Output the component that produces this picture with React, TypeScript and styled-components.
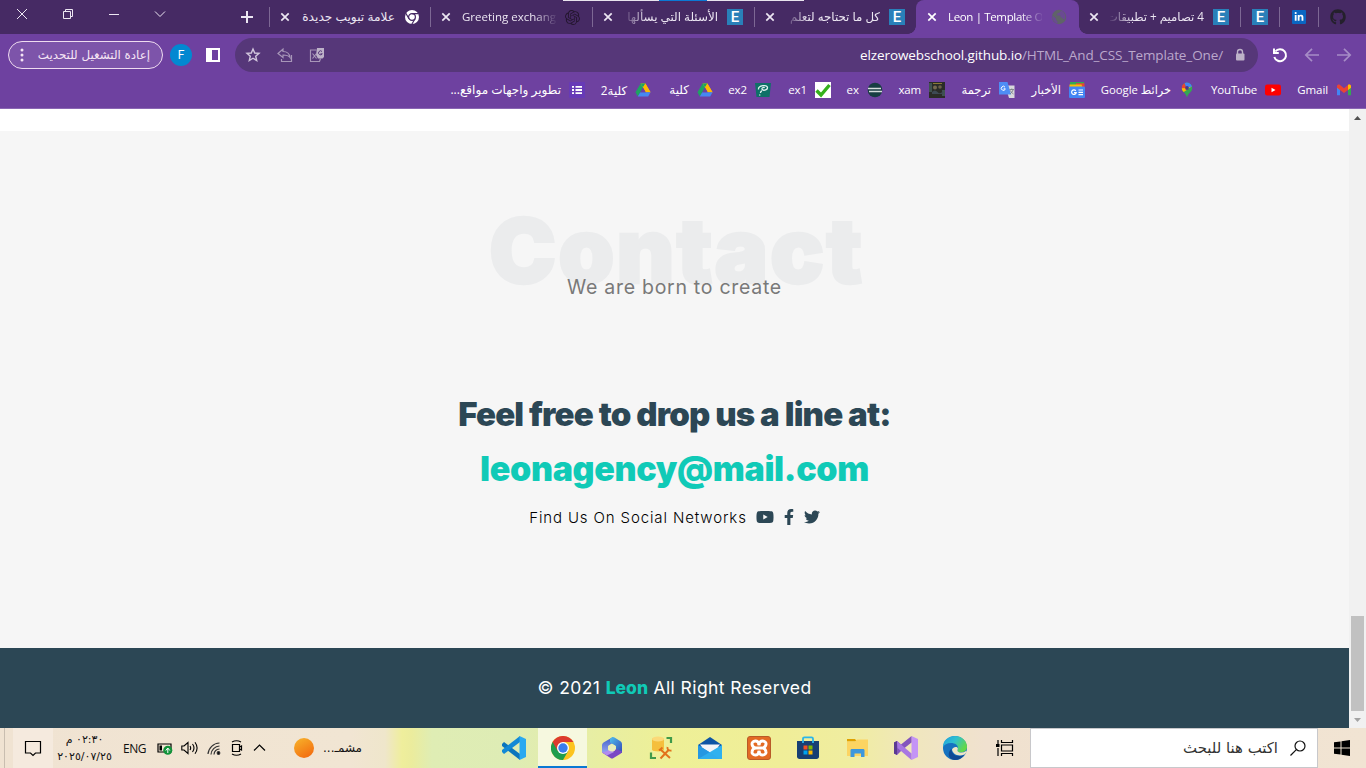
import React from "react";
import styled, { createGlobalStyle, css } from "styled-components";
import { FaYoutube, FaFacebookF, FaTwitter, FaGithub, FaLinkedinIn } from "react-icons/fa";
import { SiOpenai } from "react-icons/si";

const GlobalStyle = createGlobalStyle`
  * { box-sizing: border-box; }
  html, body { margin: 0; padding: 0; }
  body { width: 1366px; height: 768px; overflow: hidden; font-family: "Open Sans", "DejaVu Sans", sans-serif; }
  svg { display: block; flex: none; }
`;

const Screen = styled.div`
  width: 1366px;
  height: 768px;
  display: flex;
  flex-direction: column;
  position: relative;
  overflow: hidden;
`;

/* ---------- tab strip ---------- */
const TopEdge = styled.div`
  position: absolute;
  top: 0;
  left: 563px;
  width: 241px;
  height: 1px;
  background: linear-gradient(90deg, #e9e4ee 0 96px, #0b78d4 96px 144px, #e9e4ee 144px);
`;
const TabStrip = styled.div`
  height: 34px;
  flex: none;
  display: flex;
  background: #462a64;
  color: #ece6f2;
`;
const WindowControls = styled.div`
  width: 269px;
  display: flex;
  padding-left: 15px;
  align-items: flex-start;
`;
const ControlSlot = styled.div<{ $w: number; $top?: number }>`
  width: ${(p) => p.$w}px;
  padding-top: ${(p) => p.$top ?? 7}px;
`;
const Tab = styled.div<{ $w: number; $active?: boolean; $line?: boolean }>`
  width: ${(p) => p.$w}px;
  height: 34px;
  flex: none;
  display: flex;
  align-items: center;
  background: ${(p) =>
    p.$line ? "linear-gradient(#7d6894, #7d6894) 0 7px / 1px 20px no-repeat" : "none"};
  ${(p) =>
    p.$active &&
    css`
      position: relative;
      background: #6e41a0;
      border-radius: 8px 8px 0 0;
      color: #fff;
      &::before,
      &::after {
        content: "";
        position: absolute;
        bottom: 0;
        width: 8px;
        height: 8px;
      }
      &::before {
        left: -8px;
        background: radial-gradient(circle at 0 0, transparent 7.5px, #6e41a0 8px);
      }
      &::after {
        right: -8px;
        background: radial-gradient(circle at 100% 0, transparent 7.5px, #6e41a0 8px);
      }
    `}
`;
const CloseSlot = styled.div<{ $w?: number }>`
  width: ${(p) => p.$w ?? 32}px;
  padding-left: ${(p) => (p.$w ?? 32) - 21}px;
`;
const TabTitle = styled.div<{ $rtl?: boolean; $fade?: boolean; $size?: number; $gap?: number }>`
  width: 94px;
  height: 22px;
  line-height: 21px;
  overflow: hidden;
  white-space: nowrap;
  direction: ${(p) => (p.$rtl ? "rtl" : "ltr")};
  font-size: ${(p) => p.$size ?? 11.5}px;
  letter-spacing: ${(p) => p.$gap ?? 0}px;
  -webkit-mask-image: ${(p) =>
    p.$fade ? `linear-gradient(${p.$rtl ? 270 : 90}deg, #000 76%, transparent 102%)` : "none"};
`;
const TabIcon = styled.div<{ $start?: number }>`
  margin-left: ${(p) => p.$start ?? 9}px;
`;
const ESquare = styled.div`
  width: 16px;
  height: 16px;
  background: #2980b9;
  color: #fff;
  font: 500 15px/16px "Roboto", sans-serif;
  text-align: center;
`;
const InSquare = styled.div`
  width: 14px;
  height: 14px;
  border-radius: 1px;
  background: #0a66c2;
  color: #fff;
  display: grid;
  place-items: center;
`;

/* ---------- address bar ---------- */
const Toolbar = styled.div`
  height: 42px;
  flex: none;
  background: #6e41a0;
  display: flex;
  align-items: center;
  padding: 0 14px 0 8px;
  color: #fff;
`;
const UpdatePill = styled.div`
  width: 155px;
  height: 28px;
  border: 1px solid #efdcf0;
  border-radius: 14px;
  background: #7d54aa;
  display: flex;
  align-items: center;
  justify-content: space-between;
  padding: 0 12px 0 11px;
  color: #f5e4f4;
`;
const PillText = styled.span`
  direction: rtl;
  font: 11.85px/24px "DejaVu Sans", sans-serif;
  white-space: nowrap;
`;
const Avatar = styled.div`
  width: 22px;
  height: 22px;
  border-radius: 50%;
  background: #0288d1;
  margin: 0 14px 0 7px;
  font: 12px/22px "Roboto", sans-serif;
  text-align: center;
`;
const SidePanel = styled.div`
  width: 14px;
  height: 14px;
  border: 2px solid #fff;
  border-left-width: 6px;
  margin-right: 15px;
`;
const Omnibox = styled.div`
  width: 1023px;
  height: 34px;
  border-radius: 17px;
  background: #563779;
  display: flex;
  align-items: center;
  padding: 0 12px 0 10px;
  gap: 16px;
`;
const Url = styled.div`
  margin-left: auto;
  margin-right: -5px;
  font-size: 13.5px;
  letter-spacing: -0.11px;
  color: #bba8cc;
  white-space: nowrap;
  b { font-weight: 400; color: #fff; }
`;
const NavIcons = styled.div`
  display: flex;
  align-items: center;
  margin-left: 14px;
  gap: 16px;
`;

/* ---------- bookmarks ---------- */
const Bookmarks = styled.div`
  height: 33px;
  flex: none;
  display: flex;
  flex-direction: row-reverse;
  background: #6e41a0;
  border-bottom: 1px solid #8a66b3;
  padding: 5px 14px 0 0;
  color: #fff;
`;
const Bookmark = styled.div<{ $w: number }>`
  width: ${(p) => p.$w}px;
  height: 18px;
  flex: none;
  display: flex;
  flex-direction: row-reverse;
  align-items: center;
  gap: 8px;
`;
const BookmarkText = styled.span<{ $rtl?: boolean; $size?: number; $gap?: number }>`
  flex: none;
  direction: ${(p) => (p.$rtl ? "rtl" : "ltr")};
  font-size: ${(p) => p.$size ?? 11.5}px;
  letter-spacing: ${(p) => p.$gap ?? 0}px;
  line-height: 18px;
  white-space: nowrap;
`;

/* ---------- web page ---------- */
const Viewport = styled.div`
  height: 619px;
  flex: none;
  display: flex;
`;
const Page = styled.main`
  width: 1349px;
  padding-top: 22px;
  background: #fff;
  font-family: "Inter", sans-serif;
  text-align: center;
`;
const Contact = styled.section`
  height: 517px;
  background: #f6f6f6;
  display: flex;
  flex-direction: column;
  align-items: center;
  white-space: nowrap;
`;
const Ghost = styled.h2`
  margin: 60px 0 0 4px;
  height: 82px;
  font-size: 90px;
  line-height: 119px;
  font-weight: 900;
  letter-spacing: 1.8px;
  -webkit-text-stroke: 2.5px #ebeced;
  color: #ebeced;
`;
const Tagline = styled.p`
  margin: 0;
  height: 28px;
  position: relative;
  font: 19.5px/28px "Inter", sans-serif;
  letter-spacing: 0.72px;
  color: #797979;
`;
const Drop = styled.h3`
  margin: 89px 0 0;
  height: 48px;
  font-size: 33px;
  line-height: 48px;
  font-weight: 900;
  letter-spacing: -0.83px;
  color: #2c4755;
`;
const Mail = styled.a`
  margin-top: 7px;
  height: 48px;
  font-size: 34px;
  line-height: 48px;
  font-weight: 900;
  letter-spacing: -0.35px;
  color: #10cab7;
`;
const Social = styled.div`
  margin-top: 12px;
  height: 24px;
  display: flex;
  align-items: center;
  font-size: 15px;
  font-weight: 300;
  letter-spacing: 0.87px;
  color: #000;
  svg { color: #2c4755; }
`;
const SocialLinks = styled.div`
  display: flex;
  align-items: center;
  margin-left: 9px;
  gap: 7px;
`;
const Footer = styled.footer`
  height: 80px;
  background: #2c4755;
  color: #fff;
  font-size: 17.5px;
  font-weight: 400;
  letter-spacing: 0.42px;
  line-height: 80px;
  b { color: #10cab7; font-weight: 800; letter-spacing: 0; }
`;
const Scrollbar = styled.div`
  width: 17px;
  background: #f1f1f1;
  display: flex;
  flex-direction: column;
  align-items: center;
  padding: 7px 0 6px;
  justify-content: space-between;
`;
const Thumb = styled.div`
  width: 13px;
  height: 95px;
  margin-top: auto;
  margin-bottom: 7px;
  background: #c1c1c1;
`;

/* ---------- taskbar ---------- */
const Taskbar = styled.div`
  height: 40px;
  flex: none;
  display: flex;
  align-items: center;
  color: #111;
  background: linear-gradient(90deg, #f0e3d2 0 4px, #c9beb0 4px 5px, #f0e3d2 5px, #f1e5d3 350px, #efe6cb 385px, #efee9c 402px, #ebec9d 412px, #dfedb4 432px, #deecb5 510px, #e8eea2 600px, #eef097 670px, #f0ee98 780px, #f0eda0 850px, #f0e6bf 920px, #f0e1cf 985px, #f1e4d3 1366px);
`;
const Notify = styled.div`
  width: 40px;
  height: 40px;
  margin-left: 13px;
  background: #f5eade;
  display: grid;
  place-items: center;
`;
const Clock = styled.div`
  width: 65px;
  margin-right: 1px;
  padding-right: 2px;
  font: 11px/17px "DejaVu Sans", sans-serif;
  text-align: center;
  white-space: nowrap;
`;
const Lang = styled.div`
  width: 38px;
  padding-left: 4px;
  font-size: 12px;
  letter-spacing: -0.5px;
`;
const Tray = styled.div`
  display: flex;
  align-items: center;
  gap: 8px;
  height: 40px;
`;
const Weather = styled.div`
  display: flex;
  align-items: center;
  gap: 9px;
  margin-left: 27px;
  width: 195px;
  font: 12px/24px "DejaVu Sans", sans-serif;
  direction: ltr;
`;
const Sun = styled.div`
  width: 20px;
  height: 20px;
  border-radius: 50%;
  background: linear-gradient(150deg, #f7b52c, #f3640c);
`;
const TaskButton = styled.div<{ $active?: boolean; $w?: number }>`
  width: ${(p) => p.$w ?? 49}px;
  height: 40px;
  flex: none;
  display: grid;
  place-items: center;
  ${(p) =>
    p.$active &&
    css`
      background: #f6f8df;
      border-bottom: 2px solid #0a78d4;
      padding-top: 2px;
    `}
`;
const Search = styled.div`
  width: 288px;
  height: 40px;
  flex: none;
  margin-left: auto;
  background: #fff;
  border: 1px solid #c8c8cb;
  display: flex;
  align-items: center;
  justify-content: flex-end;
  gap: 12px;
  padding-right: 11px;
  font: 14.9px/24px "DejaVu Sans", sans-serif;
  color: #333;
`;
const Start = styled.div`
  width: 48px;
  flex: none;
  display: grid;
  place-items: center;
`;

const CloseX = () => (
  <svg width="10" height="10" viewBox="0 0 10 10" stroke="currentColor" strokeWidth="1.7">
    <path d="M1.3 1.3 8.7 8.7M8.7 1.3 1.3 8.7" />
  </svg>
);
const ChromeMono = () => (
  <svg width="16" height="16" viewBox="0 0 16 16">
    <circle cx="8" cy="8" r="7" fill="#fff" />
    <circle cx="8" cy="8" r="3.4" fill="none" stroke="#462a64" strokeWidth="1.2" />
    <path d="M8 4.6h6.4M5 9.7 1.8 4.2M11 9.7 7.8 15.2" stroke="#462a64" strokeWidth="1.2" />
  </svg>
);
const Globe = () => (
  <svg width="16" height="16" viewBox="0 0 16 16">
    <circle cx="8" cy="8" r="7.2" fill="#5f6368" />
    <path d="M1.600 6.500 5 9.500v1.500l1.500 1.500v2.200A6.800 6.800 0 0 1 1.600 6.500M9.500 1.200v1.300L8 4H6.500v1.500L5 6.500h4.500v2H11l1.200 1.500 1.300.5A6.500 6.500 0 0 0 9.500 1.200" fill="#6e41a0" opacity=".75" />
  </svg>
);
const Drive = () => (
  <svg width="16" height="16" viewBox="0 0 16 16">
    <path d="M5.600 1.500h4.800L5.300 10.300 2.800 14.400.5 10.300z" fill="#1ea362" />
    <path d="M5.600 1.500h4.800l5.100 8.800h-4.800z" fill="#ffba00" />
    <path d="M8 1.500H5.600L8 5.600l2.400-4.100z" fill="#1ea362" />
    <path d="M8 5.600 10.400 1.500l5.100 8.800h-4.800z" fill="#ffba00" />
    <path d="M5.300 10.300h10.200l-2.300 4.100H2.800z" fill="#4688f1" />
    <path d="M8 5.600 5.300 10.300h5.400z" fill="#6e41a0" />
  </svg>
);
const Gmail = () => (
  <svg width="16" height="16" viewBox="0 0 16 16">
    <path d="M1 3.500v9.800h3V7z" fill="#4285f4" />
    <path d="M15 3.500v9.800h-3V7z" fill="#34a853" />
    <path d="M1 4.200C1 2.500 3 2.200 4 3l4 3.200L12 3c1-.8 3-.5 3 1.200v1.600L8 11 1 5.800z" fill="#ea4335" />
    <path d="M12 3c1-.8 3-.5 3 1.200v1.600L12 8z" fill="#fbbc04" />
  </svg>
);
const YouTube = () => (
  <svg width="16" height="16" viewBox="0 0 16 16">
    <rect y="2.500" width="16" height="11" rx="2.200" fill="#f00" />
    <path d="m6.500 5.700 4 2.300-4 2.300z" fill="#fff" />
  </svg>
);
const MapsPin = () => (
  <svg width="16" height="16" viewBox="0 0 16 16">
    <path d="M8 .6a5.300 5.300 0 0 0-5.200 5.600c0 3.800 3.800 4.200 5.200 9.200 1.400-5 5.200-5.400 5.200-9.200A5.300 5.300 0 0 0 8 .6" fill="#34a853" />
    <path d="M5.500 1.200A5.300 5.300 0 0 1 13 4.600L8 8z" fill="#4285f4" />
    <path d="M5.500 1.200C3.600 2.200 2.600 4 2.800 6.500L8 8z" fill="#ea4335" />
    <path d="M2.800 6.200c.1 1.800.9 2.800 1.900 3.900L13 4.600 8 6z" fill="#fbbc04" />
    <path d="M13 4.600c.6 3.400-1 4.700-2.500 6.200L8 8z" fill="#34a853" />
    <circle cx="8" cy="6" r="1.900" fill="#4c3a86" />
  </svg>
);
const News = () => (
  <svg width="16" height="16" viewBox="0 0 16 16">
    <path d="M1 0h14v5H1z" fill="#34a853" />
    <path d="M7 1.300h8.500v4H7z" fill="#ea4335" />
    <path d="M.5 2.500h12l1 3H.5z" fill="#fbbc04" />
    <rect y="4.500" width="16" height="11.500" rx="1" fill="#4285f4" />
    <path d="M9.500 8h4.500M9.500 10.300h4.500M9.500 12.600h4.500" stroke="#fff" strokeWidth="1.200" />
    <path d="M6.800 8.800A2.300 2.300 0 1 0 7.200 10.600H5" stroke="#fff" strokeWidth="1.200" fill="none" />
  </svg>
);
const Translate = () => (
  <svg width="16" height="16" viewBox="0 0 16 16">
    <path d="M6 3.500h9.500V16H10z" fill="#d8d8dc" />
    <path d="M0 0h8.500l3.500 12.500H0z" fill="#4e8df5" />
    <path d="M6 5.200A2 2 0 1 0 6.300 6.800H4.600" stroke="#fff" fill="none" />
    <path d="M10.500 7.500h4.500M12.800 6.500v1M14 8c-.5 2-2 3-3 4M11.500 8.500c.5 1.500 1.500 2.500 3 3.500" stroke="#70757a" strokeWidth=".8" fill="none" />
  </svg>
);
const Photo = () => (
  <svg width="16" height="16" viewBox="0 0 16 16">
    <rect width="16" height="16" fill="#2a2c27" />
    <path d="M0 1h3v9H0zM13 8h3v6h-3z" fill="#3f5350" />
    <circle cx="6" cy="5.500" r="2" fill="#75694f" />
    <circle cx="11" cy="5" r="1.800" fill="#6b6048" />
    <path d="M3 10q3-3 5.500 0T14 9v3H3z" fill="#3d4a54" />
    <path d="M4 1h9v1H4z" fill="#8b7836" />
  </svg>
);
const Badge = () => (
  <svg width="16" height="16" viewBox="0 0 16 16">
    <circle cx="8" cy="8" r="7.300" fill="#173d42" />
    <path d="M1 6.500h13M2 9.500h13" stroke="#d5dcdc" strokeWidth="1.300" />
  </svg>
);
const Check = () => (
  <svg width="16" height="16" viewBox="0 0 16 16">
    <rect width="16" height="16" fill="#fff" />
    <path d="M1.500 8.500 6 13 14.500 3" stroke="#35b01d" strokeWidth="3.400" fill="none" />
  </svg>
);
const QuestionMark = () => (
  <svg width="16" height="16" viewBox="0 0 16 16">
    <path d="M0 1h16l-1.500 14H1.500z" fill="#0e7167" />
    <path d="M3.500 7.500C3 3.500 12.500 2 12.500 5.500c0 3-5 3.500-5.500 1.500-.3-1.500 2-2 2.500-1M7 9c-1 0-1.500 1-1.500 2M5 12.500l-.5 1" stroke="#dff3ee" strokeWidth="1.300" fill="none" />
  </svg>
);
const ListIcon = () => (
  <svg width="16" height="16" viewBox="0 0 16 16">
    <rect width="16" height="16" rx="1" fill="#673ab7" />
    <path d="M3 4.800h2M3 8h2M3 11.200h2M6.500 4.800H13M6.500 8H13M6.500 11.200H13" stroke="#fff" strokeWidth="1.800" />
  </svg>
);

const VsCode = () => (
  <svg width="24" height="24" viewBox="0 0 24 24">
    <path d="m0 8 2-2 16 12v6L0 10z" fill="#0a75bd" />
    <path d="m0 16 2 2L18 6V0L0 14z" fill="#1289d6" />
    <path d="M17.500 0 24 3v18l-6.500 3z" fill="#29a9f0" />
  </svg>
);
const Chrome = () => (
  <svg width="24" height="24" viewBox="0 0 24 24">
    <circle cx="12" cy="12" r="12" fill="#fcc31e" />
    <path d="M12 12 1.600 6A12 12 0 0 0 12 24l5.200-9z" fill="#1f9d4d" />
    <path d="M1.600 6a12 12 0 0 1 20.800 0H12v6l-5.200 3z" fill="#dc3a2e" />
    <circle cx="12" cy="12" r="6" fill="#fff" />
    <circle cx="12" cy="12" r="4.700" fill="#3a7cec" />
  </svg>
);
const Office = () => (
  <svg width="22" height="24" viewBox="0 0 22 24">
    <defs>
      <linearGradient id="of1" x1="0" y1="0" x2="0" y2="1"><stop stopColor="#3d5fc8" /><stop offset="1" stopColor="#9aa8f4" /></linearGradient>
      <linearGradient id="of2" x1="0" y1="0" x2="1" y2="1"><stop stopColor="#4fc0ee" /><stop offset="1" stopColor="#3448b8" /></linearGradient>
    </defs>
    <path d="M12 1 2.500 6.500Q1 7.500 1 9v7.500L7 18v-8l6-4z" fill="url(#of1)" />
    <path d="M11 1.200c1-.4 1.800 0 2.500.4l6 3.700Q21 6.500 21 8v9l-6-1.500V10L9 6.500V3z" fill="url(#of2)" />
    <path d="M1 16.500 9.500 22q1.500 1 3 0l7-4.200q1.500-1 1.500-2.300L15 13l-4 3.500z" fill="#7a48c4" />
    <path d="M1 16.500 6 19.500 13 16l-4-2.500-4 2z" fill="#b08bee" />
    <circle cx="11" cy="12" r="3.600" fill="#e9eebd" />
  </svg>
);
const SqlTools = () => (
  <svg width="24" height="24" viewBox="0 0 24 24">
    <path d="M3 2.500v11c0 2.500 12 2.500 12 0v-11z" fill="#f5bf3c" />
    <ellipse cx="9" cy="3" rx="6" ry="2.400" fill="#fbd978" />
    <path d="M17.500 2H22v5M2 16.500V22h5" fill="none" stroke="#3f9a4a" strokeWidth="2.200" />
    <path d="M11.500 13.500 21 22M20 13.500l-8.500 9" stroke="#e2721b" strokeWidth="2" />
    <path d="m10 14.500 3.500-3M18.500 11c-.5 3 1.500 4 4 3.500" stroke="#e2721b" strokeWidth="1.900" fill="none" />
  </svg>
);
const MailApp = () => (
  <svg width="24" height="24" viewBox="0 0 24 24">
    <path d="M0 9 12 1l12 8v2H0z" fill="#0d55a5" />
    <path d="M2 8.500h20l-6 8H8z" fill="#f4f5f8" />
    <path d="M0 9v14h24V9l-12 7.500z" fill="#28a8ea" />
    <path d="M0 9v14h22L12 16.500z" fill="#2497e2" />
    <path d="M0 23 24 9v14z" fill="#32b4f0" opacity=".75" />
  </svg>
);
const Xampp = () => (
  <svg width="24" height="24" viewBox="0 0 24 24">
    <rect x=".5" y=".5" width="23" height="23" rx="2.500" fill="#e36a24" stroke="#b85a28" />
    <g fill="none" stroke="#fff" strokeWidth="2.900" strokeLinejoin="round">
      <path d="M12 9.200C12 3 4.300 4.500 5 8.300 5.400 11 8 12 8 12s-2.600 1-3 3.700C4.300 19.500 12 21 12 14.800" />
      <path d="M12 9.200C12 3 19.700 4.500 19 8.300c-.4 2.700-3 3.700-3 3.700s2.600 1 3 3.700c.7 3.800-7 5.300-7-.9M8 12h8" />
    </g>
  </svg>
);
const Store = () => (
  <svg width="24" height="24" viewBox="0 0 24 24">
    <path d="M1 5h22v15.500c0 1.500-1 2.500-2.500 2.500h-17C2 23 1 22 1 20.500z" fill="#173f73" />
    <path d="M7 7V2.800C7 1.800 7.500 1.300 8.500 1.300h7c1 0 1.500.5 1.500 1.500V7" fill="none" stroke="#2ab6ea" strokeWidth="1.800" />
    <path d="M7.500 9.500h4v4h-4z" fill="#f25022" /><path d="M12.500 9.500h4v4h-4z" fill="#7fba00" />
    <path d="M7.500 14.500h4v4h-4z" fill="#00a4ef" /><path d="M12.500 14.500h4v4h-4z" fill="#ffb900" />
  </svg>
);
const Folder = () => (
  <svg width="24" height="24" viewBox="0 0 24 24">
    <path d="M2 3h8l2 2.500H2z" fill="#e0a100" />
    <path d="M2 5.500h8L12 3.500h11V20H2z" fill="#fcd462" />
    <path d="M5.500 21v-6.500c0-1 .5-1.500 1.500-1.500h11c1 0 1.500.5 1.500 1.500V21H16v-3.500H9.500V21z" fill="#3d97dd" />
  </svg>
);
const VisualStudio = () => (
  <svg width="24" height="24" viewBox="0 0 24 24">
    <path d="m17.500 0 6.500 3v18l-6.500 3z" fill="#c494f6" />
    <path d="M0 6.500 3 5l4 3.500L17.500 0v6.500L8 14l-5 5-3-1.500z" fill="#8355bd" />
    <path d="m3 5 14.500 12.500V24L3.500 12z" fill="#a877e2" />
    <path d="M0 6.500 3 5v14l-3-1.500z" fill="#5b3a92" />
  </svg>
);
const Edge = () => (
  <svg width="24" height="24" viewBox="0 0 24 24">
    <defs>
      <linearGradient id="ed1" x1="0" y1="0" x2="1" y2=".5"><stop stopColor="#1d9fe0" /><stop offset=".5" stopColor="#2fc0d0" /><stop offset="1" stopColor="#62d84a" /></linearGradient>
    </defs>
    <circle cx="12" cy="12" r="12" fill="#1572c0" />
    <path d="M0 11C0 4 5.500 0 12 0s12 5 12 10.500S19 17 15.500 16c-2-.6-.8-1.500-.5-3C15.500 9 12 7 8 7S1 9 0 11" fill="url(#ed1)" />
    <path d="M8.500 13c0 6 6 9 13 5.500-2 3.500-5.500 5.500-9.500 5.500-5 0-7-4-6-7.500.5-2 1.500-3 2.500-3.500" fill="#114a94" />
    <path d="M14.900 12.500c-.1 1.500-1.200 2.500.6 3.500 2.500 1 5 .6 7.500-1l1 1-2.500 2.500C15 21 9.500 18 9 13.500c1-2.500 5-3.500 5.900-1" fill="#eee6c6" />
  </svg>
);
const TaskView = () => (
  <svg width="18" height="18" viewBox="0 0 18 18" fill="none" stroke="#000" strokeWidth="1.200">
    <path d="M5.500 1v2.500h11V1M5.500 17v-2.500h11V17M5.500 6h11v6h-11zM2 1v4M2 9v8" />
    <path d="M0 5h3.500v3H0z" fill="#000" stroke="none" />
  </svg>
);

const iconButton = { fill: "none", stroke: "currentColor" } as const;

export default function App() {
  return (
    <>
      <GlobalStyle />
      <Screen>
        <TabStrip>
          <WindowControls>
            <ControlSlot $w={46}><svg width="14" height="14" {...iconButton}><path d="m2 2 10 10M12 2 2 12" /></svg></ControlSlot>
            <ControlSlot $w={46}><svg width="14" height="14" {...iconButton}><path d="M2.500 4.500h7v7h-7zM4.500 4.500v-2h7v7h-2" /></svg></ControlSlot>
            <ControlSlot $w={46}><svg width="14" height="14" {...iconButton}><path d="M2 7.500h10" /></svg></ControlSlot>
            <ControlSlot $w={87}><svg width="14" height="14" {...iconButton}><path d="m2 4.500 5 5 5-5" /></svg></ControlSlot>
            <ControlSlot $w={29} $top={10}><svg width="14" height="14" {...iconButton} strokeWidth="2"><path d="M1 7h12M7 1v12" /></svg></ControlSlot>
          </WindowControls>
          <Tab $w={161} $line><CloseSlot><CloseX /></CloseSlot><TabTitle $rtl $size={12.2}>علامة تبويب جديدة</TabTitle><TabIcon><ChromeMono /></TabIcon></Tab>
          <Tab $w={162} $line><CloseSlot><CloseX /></CloseSlot><TabTitle $fade>Greeting exchange</TabTitle><TabIcon><SiOpenai size={15} color="#24162f" /></TabIcon></Tab>
          <Tab $w={162} $line><CloseSlot><CloseX /></CloseSlot><TabTitle $rtl $fade $size={11.9}>الأسئلة التي يسألها</TabTitle><TabIcon><ESquare>E</ESquare></TabIcon></Tab>
          <Tab $w={162} $line><CloseSlot><CloseX /></CloseSlot><TabTitle $rtl $fade $size={11.8}>كل ما تحتاجه لتعلم</TabTitle><TabIcon><ESquare>E</ESquare></TabIcon></Tab>
          <Tab $w={163} $active><CloseSlot><CloseX /></CloseSlot><TabTitle $fade $gap={-0.35}>Leon | Template One</TabTitle><TabIcon><Globe /></TabIcon></Tab>
          <Tab $w={161}><CloseSlot $w={31}><CloseX /></CloseSlot><TabTitle $rtl $fade $size={11.7}>4 تصاميم + تطبيقات</TabTitle><TabIcon><ESquare>E</ESquare></TabIcon></Tab>
          <Tab $w={39} $line><TabIcon $start={12}><ESquare>E</ESquare></TabIcon></Tab>
          <Tab $w={39} $line><TabIcon $start={13}><InSquare><FaLinkedinIn size={10} /></InSquare></TabIcon></Tab>
          <Tab $w={48} $line><TabIcon $start={12}><FaGithub size={16} color="#24202c" /></TabIcon></Tab>
        </TabStrip>

        <Toolbar>
          <UpdatePill>
            <svg width="4" height="14" fill="currentColor"><circle cx="2" cy="2" r="1.500" /><circle cx="2" cy="7" r="1.500" /><circle cx="2" cy="12" r="1.500" /></svg>
            <PillText>إعادة التشغيل للتحديث</PillText>
          </UpdatePill>
          <Avatar>F</Avatar>
          <SidePanel />
          <Omnibox>
            <svg width="16" height="16" viewBox="0 0 16 16" fill="none" stroke="#d2c6dd" strokeWidth="1.400"><path d="m8 2 1.700 4 4.300.4-3.300 2.800 1 4.300L8 11.200l-3.700 2.300 1-4.300L2 6.400 6.300 6z" /></svg>
            <svg width="16" height="16" viewBox="0 0 16 16" fill="none" stroke="#a796b8" strokeWidth="1.200"><path d="M1 6.500 6 2v2.500c4 0 6.500 2 7 6-1.500-2-4-2.500-7-2.500v2.500zM14.500 8v6.500H4.500V12" /></svg>
            <svg width="16" height="16" viewBox="0 0 16 16"><path d="M8 1h7v9l-1.500 1.500H9L7 8z" fill="#bdb2c8" /><path d="M7.500 3H1.500v11.500h9l1-3" fill="none" stroke="#a796b8" strokeWidth="1.200" /><path d="m3.500 6.500 4 5M7.500 6.500 3.500 11.500" stroke="#a796b8" strokeWidth="1.200" /><path d="M13 4.500a2 2 0 1 0 .3 2.300H11.500" stroke="#563779" strokeWidth="1" fill="none" /></svg>
            <Url><b>elzerowebschool.github.io</b>/HTML_And_CSS_Template_One/</Url>
            <svg width="12" height="14" viewBox="0 0 12 14"><path d="M3.500 6V4a2.500 2.500 0 0 1 5 0v2" fill="none" stroke="#bdb2c8" strokeWidth="1.400" /><rect x="2" y="5.500" width="8.500" height="7" rx="1" fill="#bdb2c8" /></svg>
          </Omnibox>
          <NavIcons>
            <svg width="16" height="16" viewBox="0 0 16 16" fill="none" stroke="#fff" strokeWidth="2"><path d="M3.300 4.500a6 6 0 1 1-1 5.500" /><path d="M2 1.500v4.500h4.800" /></svg>
            <svg width="16" height="16" viewBox="0 0 16 16" fill="none" stroke="#a68cc6" strokeWidth="1.700"><path d="M15 8H2M8 1.800 1.800 8 8 14.200" /></svg>
            <svg width="16" height="16" viewBox="0 0 16 16" fill="none" stroke="#a68cc6" strokeWidth="1.700"><path d="M1 8h13M8 1.800 14.200 8 8 14.200" /></svg>
          </NavIcons>
        </Toolbar>

        <Bookmarks>
          <Bookmark $w={71}><Gmail /><BookmarkText $gap={-0.1}>Gmail</BookmarkText></Bookmark>
          <Bookmark $w={86}><YouTube /><BookmarkText $gap={-0.2}>YouTube</BookmarkText></Bookmark>
          <Bookmark $w={110}><MapsPin /><BookmarkText $rtl $size={11.3}>خرائط Google</BookmarkText></Bookmark>
          <Bookmark $w={70}><News /><BookmarkText $rtl>الأخبار</BookmarkText></Bookmark>
          <Bookmark $w={70}><Translate /><BookmarkText $rtl>ترجمة</BookmarkText></Bookmark>
          <Bookmark $w={62}><Photo /><BookmarkText $gap={-0.2}>xam</BookmarkText></Bookmark>
          <Bookmark $w={52}><Badge /><BookmarkText>ex</BookmarkText></Bookmark>
          <Bookmark $w={60}><Check /><BookmarkText $gap={-0.1}>ex1</BookmarkText></Bookmark>
          <Bookmark $w={58}><QuestionMark /><BookmarkText $gap={-0.1}>ex2</BookmarkText></Bookmark>
          <Bookmark $w={62}><Drive /><BookmarkText $rtl $size={12}>كلية</BookmarkText></Bookmark>
          <Bookmark $w={66}><Drive /><BookmarkText $rtl $size={11.8}>كلية2</BookmarkText></Bookmark>
          <Bookmark $w={140}><ListIcon /><BookmarkText $rtl $size={12.05}>تطوير واجهات مواقع...</BookmarkText></Bookmark>
        </Bookmarks>

        <Viewport>
          <Page>
            <Contact>
              <Ghost>Contact</Ghost>
              <Tagline>We are born to create</Tagline>
              <Drop>Feel free to drop us a line at:</Drop>
              <Mail>leonagency@mail.com</Mail>
              <Social>
                Find Us On Social Networks
                <SocialLinks>
                  <FaYoutube size={18} />
                  <FaFacebookF size={16} />
                  <FaTwitter size={16} />
                </SocialLinks>
              </Social>
            </Contact>
            <Footer>© 2021 <b>Leon</b> All Right Reserved</Footer>
          </Page>
          <Scrollbar>
            <svg width="7" height="4"><path d="M0 4 3.500 0 7 4z" fill="#505050" /></svg>
            <Thumb />
            <svg width="7" height="4"><path d="M0 0 3.500 4 7 0z" fill="#a3a3a3" /></svg>
          </Scrollbar>
        </Viewport>

        <Taskbar>
          <Notify>
            <svg width="18" height="18" viewBox="0 0 18 18" fill="none" stroke="#000" strokeWidth="1.200"><path d="M1.500 2.500h15v11.500h-5L9 16.500 6.500 14h-5z" /></svg>
          </Notify>
          <Clock>
            <div dir="rtl">٠٢:٣٠ م</div>
            <div dir="ltr">٢٠٢٥/٠٧/٢٥</div>
          </Clock>
          <Lang>ENG</Lang>
          <Tray>
            <svg width="16" height="14" viewBox="0 0 16 14"><path d="M1 3h13v8H1z" fill="none" stroke="#000" strokeWidth="1.200" /><path d="M2.500 4.500H5v5H2.500z" /><circle cx="10.800" cy="9.200" r="4.500" fill="#12933a" /><path d="M10.800 12V7.500M8.800 9.500l2-2.500 2 2.500" stroke="#fff" fill="none" /></svg>
            <svg width="17" height="14" viewBox="0 0 17 14" fill="none" stroke="#000" strokeWidth="1.100"><path d="M.8 5H3l4-3.500v11L3 9H.8zM9 5q1.400 2 0 4M11.500 3q3 4 0 8M14 1.200q4.200 5.800 0 11.600" /></svg>
            <svg width="16" height="16" viewBox="0 0 16 16" fill="none" stroke="#333" strokeWidth="1.200"><path d="M2 14A12 12 0 0 1 13.500 3M5 14.500A9 9 0 0 1 13.500 6M8 14.500A6 6 0 0 1 13.500 9" /><circle cx="12.500" cy="13" r="1.300" fill="#000" /></svg>
            <svg width="15" height="18" viewBox="0 0 15 18" fill="none" stroke="#000" strokeWidth="1.200"><path d="M2.500 5.500h7v7h-7zM9.500 8l2-1v4l-2-1M2 3Q6.500 .500 11 3M2 15Q6.500 17.500 11 15" /></svg>
            <svg width="14" height="14" viewBox="0 0 14 14" fill="none" stroke="#000" strokeWidth="1.200"><path d="m1 9.500 5.500-5.500L12 9.500" /></svg>
          </Tray>
          <Weather><Sun /><span dir="rtl">مشمـ...</span></Weather>
          <TaskButton><VsCode /></TaskButton>
          <TaskButton $active><Chrome /></TaskButton>
          <TaskButton><Office /></TaskButton>
          <TaskButton><SqlTools /></TaskButton>
          <TaskButton><MailApp /></TaskButton>
          <TaskButton><Xampp /></TaskButton>
          <TaskButton><Store /></TaskButton>
          <TaskButton><Folder /></TaskButton>
          <TaskButton><VisualStudio /></TaskButton>
          <TaskButton><Edge /></TaskButton>
          <TaskButton $w={51}><TaskView /></TaskButton>
          <Search>
            <span dir="rtl">اكتب هنا للبحث</span>
            <svg width="16" height="16" viewBox="0 0 16 16" fill="none" stroke="#111" strokeWidth="1.200"><circle cx="10" cy="6" r="5" /><path d="M6.300 9.700.500 15.500" /></svg>
          </Search>
          <Start>
            <svg width="16" height="16" viewBox="0 0 16 16"><path d="M0 2.300 6.500 1.400V7.500H0zM7.500 1.200 16 0v7.500H7.500zM0 8.500h6.500v6.100L0 13.700zM7.500 8.500H16V16l-8.500-1.200z" /></svg>
          </Start>
        </Taskbar>
        <TopEdge />
      </Screen>
    </>
  );
}
